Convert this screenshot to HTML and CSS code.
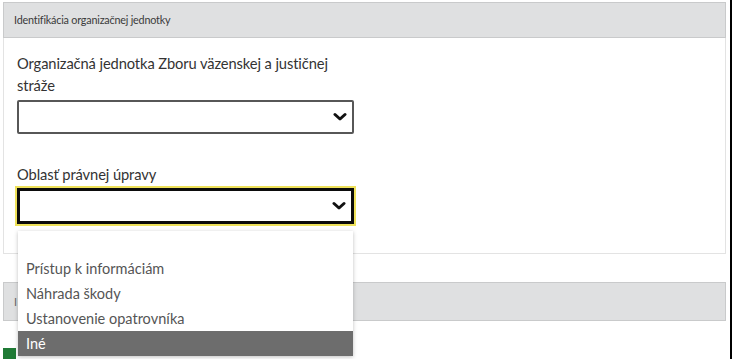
FILE: index.html
```html
<!DOCTYPE html>
<html lang="sk">
<head>
    <meta charset="UTF-8">
    <title>Identifikácia organizačnej jednotky</title>
    <link rel="stylesheet" href="styles.css">
</head>
<body>
    <div class="page">
        <section class="panel">
            <div class="panel-head">Identifikácia organizačnej jednotky</div>
            <div class="panel-body">
                <div class="field">
                    <label class="field-label">Organizačná jednotka Zboru väzenskej a justičnej stráže</label>
                    <div class="select">
                        <svg class="chev" width="14" height="10" viewBox="0 0 14 10"><path d="M2 2.5 L7 7 L12 2.5" fill="none" stroke="#111" stroke-width="3" stroke-linecap="round" stroke-linejoin="round"/></svg>
                    </div>
                </div>
                <div class="field field-open">
                    <label class="field-label">Oblasť právnej úpravy</label>
                    <div class="select focused">
                        <svg class="chev" width="14" height="10" viewBox="0 0 14 10"><path d="M2 2.5 L7 7 L12 2.5" fill="none" stroke="#111" stroke-width="3" stroke-linecap="round" stroke-linejoin="round"/></svg>
                    </div>
                    <ul class="dropdown">
                        <li class="option"></li>
                        <li class="option">Prístup k informáciám</li>
                        <li class="option">Náhrada škody</li>
                        <li class="option">Ustanovenie opatrovníka</li>
                        <li class="option selected">Iné</li>
                    </ul>
                </div>
            </div>
        </section>
        <section class="panel panel-second">
            <div class="panel-head">I</div>
        </section>
        <div class="btn-row">
            <div class="btn-green"></div>
        </div>
    </div>
</body>
</html>
```
FILE: styles.css
```css
/* Reset */
body, ul, li, label {
    margin: 0;
    padding: 0;
}

body {
    font-family: 'Lato', 'Open Sans', sans-serif;
    color: #333;
    background: #fff;
}

.page {
    width: 732px;
    height: 359px;
    border-right: 2px solid #000;
    overflow: hidden;
    padding-top: 2px;
    box-sizing: border-box;
}

/* Panels */
.panel {
    margin-left: 3px;
    width: 723px;
}

.panel-head {
    height: 36px;
    box-sizing: border-box;
    background: #dfe0e1;
    border: 1px solid #c9cacb;
    font-size: 10.8px;
    line-height: 34px;
    padding-left: 10px;
    color: #3a3a3a;
    letter-spacing: -0.2px;
}

.panel-body {
    height: 216px;
    box-sizing: border-box;
    border: 1px solid #e3e3e3;
    border-top: none;
    padding: 14px 12px 0 13px;
}

.panel-second {
    margin-top: 28px;
}

.panel-second .panel-head {
    height: 39px;
    line-height: 37px;
    color: #666;
}

/* Fields */
.field {
    width: 337px;
}

.field-label {
    display: block;
    font-size: 14.7px;
    line-height: 22px;
    color: #333;
    width: 330px;
    letter-spacing: -0.1px;
}

.select {
    margin-top: 4px;
    height: 34px;
    box-sizing: border-box;
    border: 2px solid #575757;
    border-radius: 2px;
    display: flex;
    align-items: center;
    justify-content: flex-end;
    padding-right: 5px;
}

.field-open {
    margin-top: 29px;
    position: relative;
}

.select.focused {
    margin-top: 3px;
    height: 36px;
    border: 3px solid #0b0b0b;
    border-radius: 0;
    box-shadow: 0 0 0 2px #eee15a;
}

/* Open list */
.dropdown {
    list-style: none;
    position: absolute;
    top: 68px;
    left: 1px;
    width: 335px;
    background: #fff;
    box-shadow: 0 1px 4px rgba(0, 0, 0, 0.25);
    z-index: 5;
}

.option {
    height: 25px;
    line-height: 25px;
    padding-left: 8px;
    font-size: 14.5px;
    color: #555;
}

.option.selected {
    background: #6d6d6d;
    color: #fff;
}

/* Bottom button */
.btn-row {
    display: flex;
    margin: 27px 0 0 3px;
}

.btn-green {
    background: #1f7a35;
    width: 13px;
    height: 34px;
}
```
